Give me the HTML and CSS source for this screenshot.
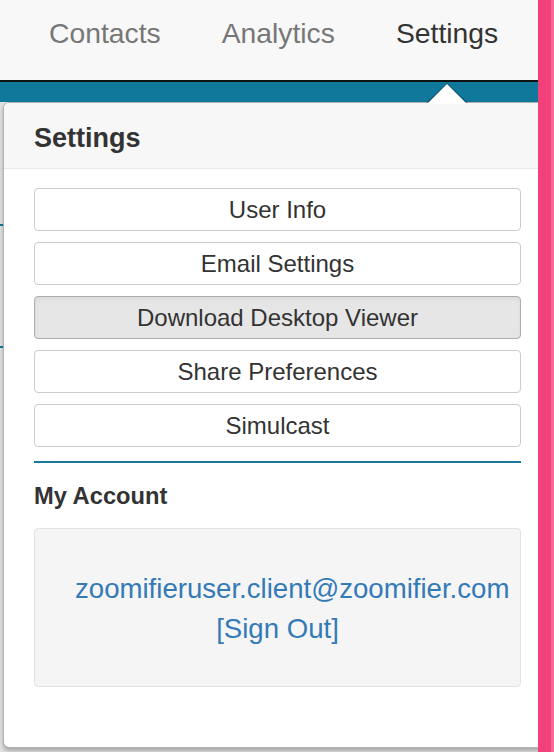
FILE: index.html
```html
<!DOCTYPE html>
<html lang="en">
<head>
    <meta charset="UTF-8">
    <meta name="viewport" content="width=device-width, initial-scale=1.0">
    <title>Settings</title>
    <link rel="stylesheet" href="styles.css">
</head>
<body>
    <header class="topbar">
        <nav class="tabs">
            <a href="#" class="tab">Contacts</a>
            <a href="#" class="tab">Analytics</a>
            <a href="#" class="tab active">Settings</a>
        </nav>
    </header>
    <div class="band"></div>

    <!-- page content behind the popover -->
    <main class="page">
        <div class="page-row first"></div>
        <div class="page-row"></div>
    </main>

    <div class="popover">
        <div class="arrow"></div>
        <h3 class="popover-title">Settings</h3>
        <div class="popover-body">
            <div class="btn-list">
                <button class="btn">User Info</button>
                <button class="btn">Email Settings</button>
                <button class="btn active">Download Desktop Viewer</button>
                <button class="btn">Share Preferences</button>
                <button class="btn">Simulcast</button>
            </div>
            <hr class="divider">
            <h4 class="section-title">My Account</h4>
            <div class="well">
                <a href="#" class="account-link">zoomifieruser.client@zoomifier.com</a><br>
                <a href="#" class="account-link">[Sign Out]</a>
            </div>
        </div>
    </div>

    <div class="side-strip"></div>
</body>
</html>
```

FILE: styles.css
```css
/* Общие стили */
body {
    margin: 0;
    font-family: "Liberation Sans", Arial, sans-serif;
    background: #e2e2e2;
    color: #333;
    height: 752px;
    overflow: hidden;
    position: relative;
}

/* Верхняя панель с вкладками */
.topbar {
    background: #f8f8f8;
    border-bottom: 2px solid #111;
    box-sizing: border-box;
    height: 82px;
}

.tabs {
    display: flex;
    gap: 61px;
    padding: 17px 0 0 49px;
}

.tab {
    font-size: 28.3px;
    line-height: 32px;
    color: #777;
    text-decoration: none;
}

.tab.active {
    color: #333;
}

.band {
    height: 20px;
    background: #10789a;
}

/* Контент страницы за всплывающим окном */
.page-row {
    height: 120px;
    border-bottom: 2px solid #10789a;
}

.page-row.first {
    height: 122px;
}

/* Всплывающее окно */
.popover {
    position: absolute;
    top: 102px;
    left: 3px;
    width: 549px;
    box-sizing: border-box;
    background: #fff;
    border: 1px solid rgba(0, 0, 0, 0.3);
    border-radius: 6px;
    box-shadow: 0 3px 4px rgba(0, 0, 0, 0.25);
}

.arrow {
    position: absolute;
    top: -20px;
    left: 422px;
    width: 0;
    height: 0;
    border-style: solid;
    border-width: 0 21px 20px;
    border-color: transparent transparent rgba(0, 0, 0, 0.3);
}

.arrow::after {
    content: "";
    position: absolute;
    top: 1px;
    left: -20px;
    border-style: solid;
    border-width: 0 20px 20px;
    border-color: transparent transparent #fff;
}

.popover-title {
    margin: 0;
    padding: 20px 30px 15px;
    font-size: 27px;
    line-height: 30px;
    font-weight: bold;
    color: #333;
    background: #f7f7f7;
    border-bottom: 1px solid #e8e8e8;
    border-radius: 5px 5px 0 0;
}

.popover-body {
    padding: 19px 30px 60px;
}

.btn-list {
    display: flex;
    flex-direction: column;
    gap: 11px;
}

.btn {
    height: 43px;
    display: flex;
    align-items: center;
    justify-content: center;
    font-family: inherit;
    font-size: 24px;
    color: #333;
    background: #fff;
    border: 1px solid #ccc;
    border-radius: 4px;
    padding: 0;
}

.btn.active {
    background: #e6e6e6;
    border-color: #adadad;
    box-shadow: inset 0 2px 4px rgba(0, 0, 0, 0.06);
}

.divider {
    margin: 14px 0 0;
    border: none;
    height: 2px;
    background: #1a789a;
}

.section-title {
    margin: 19px 0 18px;
    font-size: 23.7px;
    line-height: 28px;
    font-weight: bold;
    color: #333;
}

.well {
    padding: 40px 40px 37px;
    background: #f5f5f5;
    border: 1px solid #e3e3e3;
    border-radius: 4px;
    text-align: center;
    white-space: nowrap;
    font-size: 27.6px;
    line-height: 40px;
}

.account-link {
    color: #337ab7;
    text-decoration: none;
}

/* Розовая полоса справа */
.side-strip {
    position: absolute;
    top: 0;
    right: 0;
    width: 13px;
    height: 100%;
    background: #f2417a;
    border-right: 3px solid #f56a95;
}
```
